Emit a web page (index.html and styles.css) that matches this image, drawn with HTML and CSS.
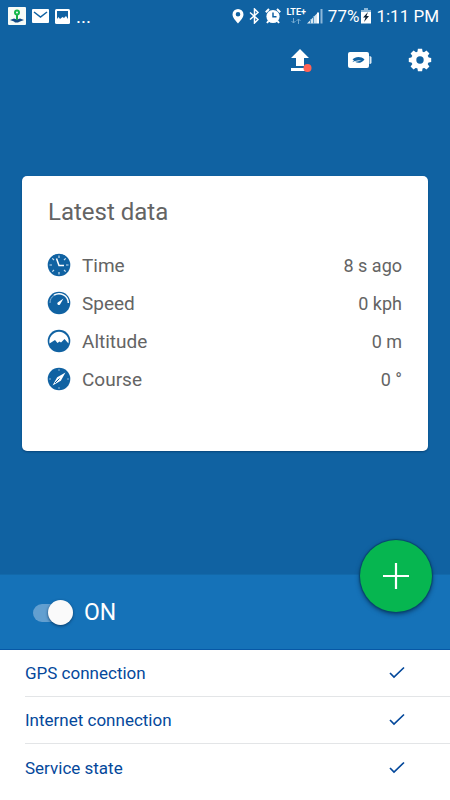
FILE: index.html
```html
<!DOCTYPE html>
<html lang="en">
<head>
<meta charset="utf-8">
<meta name="viewport" content="width=device-width, initial-scale=1">
<title>Tracker</title>
<link rel="stylesheet" href="styles.css">
</head>
<body>
<main class="app">
  <section class="hero">
    <div class="status">
      <div class="status-left">
        <svg width="18" height="18" viewBox="0 0 18 18"><rect width="18" height="18" rx="1" fill="#f7fbf7"/><path d="M2 13l4-1.500 3 1 3-1 4 1.500-4 1.500-2 1H7l-1-1z" fill="#134b86"/><path d="M9 13V8" stroke="#15a84a" stroke-width="2"/><circle cx="9" cy="5.500" r="2" fill="none" stroke="#15b84a" stroke-width="2"/></svg>
        <svg width="17" height="14" viewBox="0 0 17 14"><rect width="17" height="14" rx="1" fill="#fff"/><path d="M2 3l6.500 5L15 3" fill="none" stroke="#1062a2" stroke-width="1.500"/></svg>
        <svg class="picture" width="15" height="15" viewBox="0 0 15 15"><rect width="15" height="15" rx="1.500" fill="#fff"/><path d="M2 2h11v8l-2-3-2 2-1.500-1L5 10 3.500 8 2 10z" fill="#1062a2"/></svg>
        <span class="more">...</span>
      </div>
      <div class="status-right">
        <svg width="12" height="16" viewBox="0 0 12 16"><path fill="#fff" fill-rule="evenodd" d="M6 1a5.500 5.500 0 0 0-5.500 5.500C.5 10 6 15.500 6 15.500S11.500 10 11.500 6.500A5.500 5.500 0 0 0 6 1zm0 3a2.300 2.300 0 1 1 0 4.600A2.300 2.300 0 0 1 6 4z"/></svg>
        <svg class="bluetooth" width="11" height="16" viewBox="0 0 11 16"><path d="M1 4.500l8 7L5.500 15V1L9 4.500l-8 7" fill="none" stroke="#fff" stroke-width="1.500"/></svg>
        <svg class="alarm" width="16" height="16" viewBox="0 0 16 16"><circle cx="8" cy="8.500" r="6.600" fill="#fff"/><path d="M.8 4.200L4 1M15.200 4.200L12 1M3.500 13L2 15M12.500 13l1.500 2" stroke="#fff" stroke-width="2"/><path d="M8 4.500v4.300h3.500" fill="none" stroke="#1062a2" stroke-width="1.500"/></svg>
        <span class="network"><span>LTE+</span><svg width="10" height="6" viewBox="0 0 10 6"><path d="M2.500 0v5M.5 3l2 2 2-2M7.500 6V1M5.500 3l2-2 2 2" fill="none" stroke="#75aad1"/></svg></span>
        <svg width="16" height="16" viewBox="0 0 16 16"><path d="M0 15.500L10 5.500v10z" fill="#d6e6f1"/><path d="M3.500 16v-5M6.500 16V8" stroke="#5b9bca"/><path d="M11 15.500V4.500" stroke="#fff" stroke-width="2"/><path d="M14.500 15.500V1" stroke="#8cb7d8" stroke-width="2"/></svg>
        <span class="percent">77%</span>
        <svg class="charge" width="10" height="16" viewBox="0 0 10 16"><path d="M3 0h4v2h3v4H0V2h3z" fill="#8cb7d8"/><path d="M0 4h10v11.500H0z" fill="#fff"/><path d="M7 4L2 9.500h2.500L3 14l5-6H5.500z" fill="#102336"/></svg>
        <time class="clock">1:11 PM</time>
      </div>
    </div>
    <header class="toolbar">
      <button class="tool" aria-label="Upload"><svg width="24" height="24" viewBox="0 0 24 24"><path d="M12 1l9 9h-5v8H8v-8H3zM3 20h18v3H3z" fill="#fff"/><circle cx="19.500" cy="20" r="4" fill="#ff6254"/></svg></button>
      <button class="tool" aria-label="Battery saver"><svg width="24" height="24" viewBox="0 0 24 24"><rect x="0" y="4" width="21" height="16" rx="2" fill="#fff"/><path d="M21.500 8q2 0 2 1.500v5q0 1.500-2 1.500z" fill="#dce9f3"/><path d="M4.500 11.500C7 8.500 13 8 16.500 11.500c-3 4-7 4-9.500 2.200q3.500 0 6.500-1.600-4 .3-6.500.9-1.500.3-2.500 1.200.3-1.200 1.500-2z" fill="#1062a2"/></svg></button>
      <button class="tool" aria-label="Settings"><svg width="24" height="24" viewBox="0 0 24 24"><g fill="#fff"><circle cx="12" cy="12" r="8.800"/><path d="M9.300 4.500l.6-3.700h4.200l.6 3.700v15l-.6 3.700H9.900l-.6-3.700z"/><path d="M9.300 4.500l.6-3.700h4.200l.6 3.700v15l-.6 3.700H9.900l-.6-3.700z" transform="rotate(45 12 12)"/><path d="M9.300 4.500l.6-3.700h4.200l.6 3.700v15l-.6 3.700H9.900l-.6-3.700z" transform="rotate(90 12 12)"/><path d="M9.300 4.500l.6-3.700h4.200l.6 3.700v15l-.6 3.700H9.900l-.6-3.700z" transform="rotate(135 12 12)"/></g><circle cx="12" cy="12" r="3.700" fill="#1062a2"/></svg></button>
    </header>
    <article class="card">
      <h1>Latest data</h1>
      <dl class="data">
        <div class="datum"><dt><svg width="24" height="24" viewBox="0 0 24 24"><circle cx="12" cy="12" r="11.300" fill="#1062a2"/><path d="M12 2.500v2.500M12 19v2.500M2.500 12H5M19 12h2.500M5.300 5.300L7 7M17 17l1.700 1.700M18.700 5.300L17 7M7 17l-1.700 1.700" stroke="#c9deef" stroke-width="1.200"/><path d="M9.500 5.500L12 12.500h5" fill="none" stroke="#fff" stroke-width="1.500"/></svg>Time</dt><dd>8 s ago</dd></div>
        <div class="datum"><dt><svg width="24" height="24" viewBox="0 0 24 24"><circle cx="12" cy="12" r="11.300" fill="#1062a2"/><path d="M3 12a9 9 0 0 1 4-7.600" fill="none" stroke="#8bb5d7"/><path d="M7 4.200A9.300 9.300 0 0 1 21.300 12" fill="none" stroke="#fff" stroke-width="1.500"/><path d="M16.500 7.500L13 13.500a1.500 1.500 0 0 1-2.300-2z" fill="#fff"/></svg>Speed</dt><dd>0 kph</dd></div>
        <div class="datum"><dt><svg width="24" height="24" viewBox="0 0 24 24"><circle cx="12" cy="12" r="11.300" fill="#1062a2"/><path d="M2.500 14.500a9.700 9.700 0 1 1 19 0L17.500 10l-3.500 3.500-1.500-1-2 1.500L8 11z" fill="#fff"/></svg>Altitude</dt><dd>0 m</dd></div>
        <div class="datum"><dt><svg width="24" height="24" viewBox="0 0 24 24"><circle cx="12" cy="12" r="11.300" fill="#1062a2"/><path d="M12 2v2M12 20v2M2 12h2M20 12h2" stroke="#8bb5d7"/><path d="M18.500 5.500l-4.700 8.300-8.300 4.700 4.700-8.300z" fill="#fff"/><path d="M8 16l4.500-4.500" stroke="#1062a2"/></svg>Course</dt><dd>0 °</dd></div>
      </dl>
    </article>
  </section>
  <section class="panel">
    <label class="switch"><input type="checkbox" role="switch" checked><span>ON</span></label>
    <button class="fab" aria-label="Add"><svg width="28" height="28" viewBox="0 0 28 28"><path d="M14 1v26M1 14h26" stroke="#fff" stroke-width="2.200"/></svg></button>
  </section>
  <ul class="checks">
    <li>GPS connection<svg width="16" height="14" viewBox="0 0 16 14"><path d="M1 7l4 4L15 1.500" fill="none" stroke="#04489b" stroke-width="1.700"/></svg></li>
    <li>Internet connection<svg width="16" height="14" viewBox="0 0 16 14"><path d="M1 7l4 4L15 1.500" fill="none" stroke="#04489b" stroke-width="1.700"/></svg></li>
    <li>Service state<svg width="16" height="14" viewBox="0 0 16 14"><path d="M1 7l4 4L15 1.500" fill="none" stroke="#04489b" stroke-width="1.700"/></svg></li>
  </ul>
</main>
</body>
</html>
```
FILE: styles.css
```css
* { box-sizing: border-box; }
body { margin: 0; background: #fff; font-family: Roboto, "Liberation Sans", sans-serif; }
button { border: 0; padding: 0; background: none; cursor: pointer; }
svg { display: block; flex: none; }
.app { display: flex; flex-direction: column; min-height: 100vh; }
.hero { flex: 1; background: #1062a2; }
.status { display: flex; justify-content: space-between; height: 32px; padding: 0 11px 0 8px; color: #fff; font-size: 17px; }
.status-left, .status-right { display: flex; align-items: center; }
.status-left { gap: 6px; }
.more { font-size: 19px; }
.bluetooth { margin-left: 5px; }
.alarm { margin: 0 5px; }
.network { display: flex; flex-direction: column; align-items: center; gap: 1px; margin-right: 1px; font-size: 9px; line-height: 9px; font-weight: 700; }
.percent { margin-left: 5px; }
.charge { margin: 0 5px 0 2px; }
.toolbar { display: flex; justify-content: flex-end; gap: 36px; height: 56px; padding: 0 18px; }
.tool { display: grid; place-items: center; width: 24px; }
.card { min-height: 275px; margin: 88px 22px 0; padding: 22px 26px; border-radius: 5px; background: #fff; color: #646464; box-shadow: 0 1px 2px #07447a; }
h1 { margin: 0 0 20px; font-size: 24px; line-height: 28px; font-weight: 400; }
.data { margin: 0; }
.datum { display: flex; align-items: center; justify-content: space-between; height: 38px; font-size: 19px; }
dt { display: flex; align-items: center; gap: 11px; margin-left: -1px; }
dd { margin: 0; font-size: 18px; }
.panel { position: relative; display: flex; align-items: center; height: 76px; padding: 1px 33px 0; background: #1572b8; border-top: 1px solid #1269aa; border-bottom: 1px solid #0758a6; }
.switch { display: flex; align-items: center; gap: 11px; color: #fff; font-size: 23px; cursor: pointer; }
.switch input { appearance: none; display: flex; align-items: center; width: 40px; height: 18px; margin: 0; background: #629fd0; border-radius: 9px; }
.switch input::before { content: ""; width: 25px; height: 25px; border-radius: 50%; background: #fafafa; box-shadow: 0 1px 3px #0b3e6c; }
.switch input:checked::before { margin-left: auto; }
.fab { position: absolute; top: -35px; right: 18px; display: grid; place-items: center; width: 72px; height: 72px; border-radius: 50%; background: #06b650; box-shadow: 0 0 1px 1px #09456f, 0 2px 5px #063660; }
.checks { margin: 0; padding: 0 0 9px 25px; list-style: none; color: #04489b; font-size: 17px; }
.checks li { display: flex; align-items: center; justify-content: space-between; height: 47px; padding-right: 45px; border-bottom: 1px solid #e3e5e7; }
.checks li:last-child { border-bottom: 0; }
```
